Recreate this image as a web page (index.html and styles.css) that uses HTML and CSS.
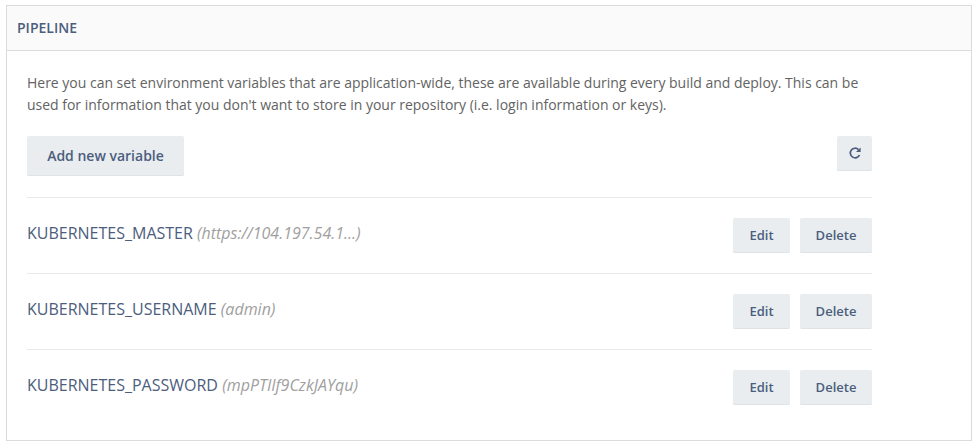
FILE: index.html
```html
<!DOCTYPE html>
<html lang="en">
<head>
<meta charset="utf-8">
<title>Pipeline</title>
<link rel="stylesheet" href="styles.css">
</head>
<body>
<section class="panel">
  <h2 class="panel-title">PIPELINE</h2>
  <div class="panel-body">
    <p class="intro">Here you can set environment variables that are application-wide, these are available during every build and deploy. This can be<br>used for information that you don't want to store in your repository (i.e. login information or keys).</p>
    <div class="toolbar">
      <button class="btn btn-add">Add new variable</button>
      <button class="btn btn-refresh" aria-label="Refresh">
        <svg width="13" height="13" viewBox="0 0 13 13"><path d="M11.5 8A4.8 4.8 0 1 1 10.5 2.6" fill="none" stroke="currentColor" stroke-width="1.7"/><path d="M12.6.5v4.6H8z" fill="currentColor"/></svg>
      </button>
    </div>
    <ul class="variables">
      <li class="variable"><div class="label"><span class="name">KUBERNETES_MASTER</span> <em class="value">(https://104.197.54.1...)</em></div><div class="actions"><button class="btn btn-edit">Edit</button><button class="btn btn-delete">Delete</button></div></li>
      <li class="variable"><div class="label"><span class="name">KUBERNETES_USERNAME</span> <em class="value">(admin)</em></div><div class="actions"><button class="btn btn-edit">Edit</button><button class="btn btn-delete">Delete</button></div></li>
      <li class="variable"><div class="label"><span class="name">KUBERNETES_PASSWORD</span> <em class="value">(mpPTIIf9CzkJAYqu)</em></div><div class="actions"><button class="btn btn-edit">Edit</button><button class="btn btn-delete">Delete</button></div></li>
    </ul>
  </div>
</section>
</body>
</html>
```
FILE: styles.css
```css
* { box-sizing: border-box; }
body { margin: 0; padding: 5px 7px 0 6px; background: #fff; font-family: "Open Sans", sans-serif; color: #4c5d7d; }
.panel { height: 436px; border: 1px solid #d9dcdd; }
.panel-title { margin: 0; height: 45px; padding-left: 10px; border-bottom: 1px solid #d9dddd; background: #fafafa; font-size: 14px; font-weight: 600; line-height: 44px; }
.panel-body { width: 865px; padding: 21px 0 0 20px; }
.intro { margin: 0; color: #636363; font-size: 14px; line-height: 22px; letter-spacing: -0.012px; white-space: nowrap; }
.toolbar { display: flex; justify-content: space-between; align-items: flex-start; height: 61px; margin-top: 20px; }
.btn { display: flex; align-items: center; justify-content: center; height: 35px; margin: 0; padding: 0 0 1px; border: 0; border-radius: 2px; box-shadow: inset 0 -1px #dfe3e6; background: #e9edf0; color: #4c5d7d; font: 600 13px "Open Sans", sans-serif; }
.btn-add { width: 157px; height: 40px; font-size: 14px; }
.btn-refresh { width: 35px; padding-bottom: 0; }
.btn-edit { width: 57px; }
.btn-delete { width: 72px; }
.variables { margin: 0; padding: 0; list-style: none; }
.variable { display: flex; justify-content: space-between; height: 76px; padding-top: 20px; border-top: 1px solid #e8eaea; }
.label { font-size: 16px; line-height: 30px; }
.value { color: #a0a0a0; }
.actions { display: flex; gap: 10px; }
```
